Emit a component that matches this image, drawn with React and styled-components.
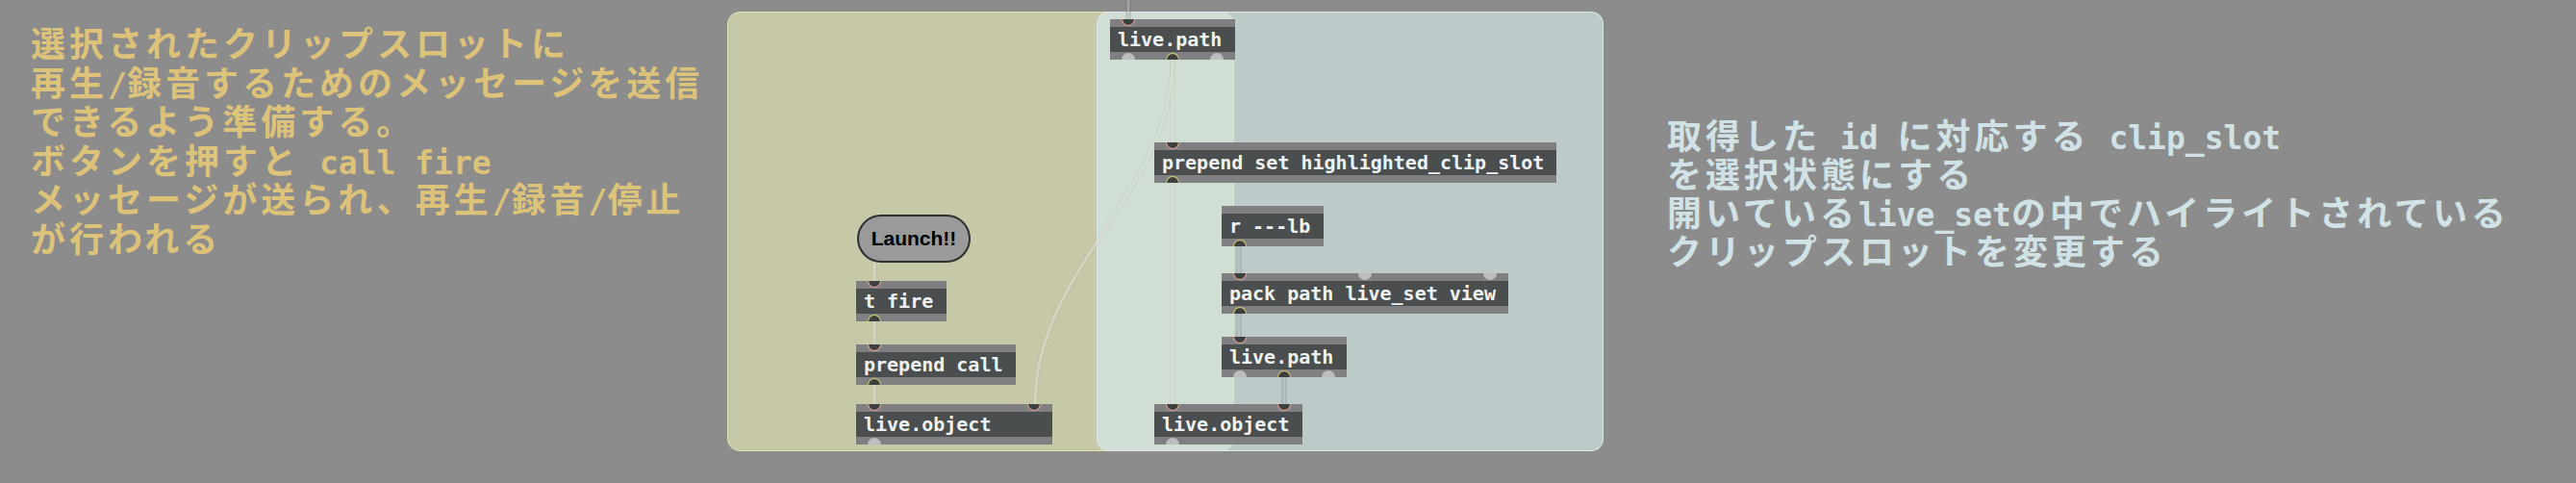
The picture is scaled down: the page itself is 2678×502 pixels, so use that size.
import styled, { createGlobalStyle } from 'styled-components'

const GlobalStyle = createGlobalStyle`
  html, body {
    margin: 0;
    padding: 0;
    background: #8c8c8c;
  }
`

const MONO = '"DejaVu Sans Mono", "Liberation Mono", monospace'
const JP = '"Noto Sans CJK JP", "Noto Sans", sans-serif'

// patcher objects, placed where they sit on the Max canvas
const objects = [
  { x: 1154, y: 20, w: 130, text: 'live.path', ins: ['in'], outs: ['off', 'out', 'off'] },
  { x: 890, y: 292, w: 94, text: 't fire', ins: ['in'], outs: ['out'] },
  { x: 890, y: 358, w: 166, text: 'prepend call', ins: ['in'], outs: ['out'] },
  { x: 890, y: 420, w: 204, text: 'live.object', ins: ['in', 'in'], outs: ['off'] },
  { x: 1200, y: 148, w: 418, text: 'prepend set highlighted_clip_slot', ins: ['in'], outs: ['out'] },
  { x: 1270, y: 214, w: 106, text: 'r ---lb', ins: [], outs: ['out'] },
  { x: 1270, y: 284, w: 298, text: 'pack path live_set view', ins: ['in', 'off', 'off'], outs: ['out'] },
  { x: 1270, y: 350, w: 130, text: 'live.path', ins: ['in'], outs: ['off', 'out', 'off'] },
  { x: 1200, y: 420, w: 154, text: 'live.object', ins: ['in', 'in'], outs: ['off'] },
]

// strong cords sit on the blue panel / grey canvas, faint ones cross the light strip
const cords = [
  { d: 'M1173,-4 L1173,20', strong: true },
  { d: 'M909,273 L909,292', strong: false },
  { d: 'M909,334 L909,358', strong: false },
  { d: 'M909,400 L909,420', strong: false },
  { d: 'M1219,62 L1219,148', strong: false },
  { d: 'M1219,190 L1219,420', strong: false },
  { d: 'M1219,62 C1219,200 1076,280 1076,420', strong: false },
  { d: 'M1288,256 L1288,284', strong: true },
  { d: 'M1288,326 L1288,350', strong: true },
  { d: 'M1335,392 L1335,420', strong: true },
]

const Canvas = styled.div`
  position: relative;
  width: 2678px;
  height: 502px;
  overflow: hidden;
  background: #8c8c8c;
`

const Panel = styled.div`
  position: absolute;
  left: ${(p) => p.$x}px;
  top: ${(p) => p.$y}px;
  width: ${(p) => p.$w}px;
  height: ${(p) => p.$h}px;
  box-sizing: border-box;
  border-radius: 13px;
  background: ${(p) => p.$bg};
  border: 1.5px solid ${(p) => p.$edge};
`

const Cords = styled.svg`
  position: absolute;
  left: 0;
  top: 0;
  pointer-events: none;
`

const Box = styled.div`
  position: absolute;
  left: ${(p) => p.$x}px;
  top: ${(p) => p.$y}px;
  width: ${(p) => p.$w}px;
  height: 42px;
  display: flex;
  flex-direction: column;
  background: #808083;
`

const PortRow = styled.div`
  height: 8px;
  display: flex;
  justify-content: space-between;
  align-items: ${(p) => (p.$edge === 'top' ? 'flex-start' : 'flex-end')};
  padding: 0 12px;
`

const Port = styled.span`
  box-sizing: border-box;
  width: 14px;
  height: 7px;
  border-radius: ${(p) => (p.$edge === 'top' ? '0 0 7px 7px' : '7px 7px 0 0')};
  background: ${(p) => (p.$kind === 'off' ? '#bdbdbd' : '#3d4040')};
  border: ${(p) =>
    p.$kind === 'in' ? '1.5px solid #eea596' : p.$kind === 'out' ? '1.5px solid #d6d56c' : 'none'};
  ${(p) => (p.$edge === 'top' ? 'border-top: none;' : 'border-bottom: none;')}
`

const Label = styled.div`
  height: 26px;
  background: #4a4e4e;
  color: #eef2f3;
  font-family: ${MONO};
  font-weight: bold;
  font-size: 20px;
  line-height: 26px;
  padding-left: 8px;
  white-space: pre;
`

const Button = styled.div`
  position: absolute;
  left: ${(p) => p.$x}px;
  top: ${(p) => p.$y}px;
  width: 118px;
  height: 50px;
  box-sizing: border-box;
  border: 2px solid #2f3131;
  border-radius: 25px;
  background: #9a9a9a;
  display: flex;
  align-items: center;
  justify-content: center;
  color: #000;
  font-family: "Liberation Sans", Arial, sans-serif;
  font-weight: bold;
  font-size: 21px;
`

const Comment = styled.div`
  position: absolute;
  left: ${(p) => p.$x}px;
  top: ${(p) => p.$y}px;
  color: ${(p) => p.$color};
  font-family: ${JP};
  font-weight: bold;
  font-size: 36px;
  letter-spacing: 4px;
`

const Line = styled.div`
  height: ${(p) => p.$lh}px;
  line-height: ${(p) => p.$lh}px;
  white-space: pre;
`

const L = styled.span`
  font-family: ${MONO};
  font-size: 33px;
  letter-spacing: 0;
  line-height: 30px;
`

const PatchBox = ({ o }) => (
  <Box $x={o.x} $y={o.y} $w={o.w}>
    <PortRow $edge="top">
      {o.ins.map((k, i) => (
        <Port key={i} $kind={k} $edge="top" />
      ))}
    </PortRow>
    <Label>{o.text}</Label>
    <PortRow $edge="bottom">
      {o.outs.map((k, i) => (
        <Port key={i} $kind={k} $edge="bottom" />
      ))}
    </PortRow>
  </Box>
)

const App = () => {
  return (
    <>
      <GlobalStyle />
      <Canvas>
        <Comment $x={32} $y={23} $color="#ddc27a">
          <Line $lh={40.6}>選択されたクリップスロットに</Line>
          <Line $lh={40.6}>再生<L>/</L>録音するためのメッセージを送信</Line>
          <Line $lh={40.6}>できるよう準備する。</Line>
          <Line $lh={40.6}>ボタンを押すと<L> call fire</L></Line>
          <Line $lh={40.6}>メッセージが送られ、再生<L>/</L>録音<L>/</L>停止</Line>
          <Line $lh={40.6}>が行われる</Line>
        </Comment>

        <Panel $x={756} $y={12} $w={527} $h={457} $bg="#c7c8a8" $edge="#dfe1b4" />
        <Panel $x={1140} $y={12} $w={527} $h={457} $bg="rgba(212, 233, 233, 0.67)" $edge="rgba(222, 236, 236, 0.9)" />

        <Cords width="2678" height="502">
          {cords.map((c, i) => (
            <g key={i} fill="none" strokeLinecap="round">
              <path
                d={c.d}
                stroke={c.strong ? 'rgba(40, 45, 45, 0.22)' : 'rgba(60, 60, 50, 0.06)'}
                strokeWidth="5"
              />
              <path
                d={c.d}
                stroke={c.strong ? 'rgba(236, 240, 240, 0.4)' : 'rgba(236, 238, 224, 0.45)'}
                strokeWidth="3"
              />
            </g>
          ))}
        </Cords>

        <Button $x={891} $y={223}>Launch!!</Button>
        {objects.map((o, i) => (
          <PatchBox key={i} o={o} />
        ))}

        <Comment $x={1733} $y={119} $color="#d0e2e6">
          <Line $lh={40}>取得した<L> id </L>に対応する<L> clip_slot</L></Line>
          <Line $lh={40}>を選択状態にする</Line>
          <Line $lh={40}>開いている<L>live_set</L>の中でハイライトされている</Line>
          <Line $lh={40}>クリップスロットを変更する</Line>
        </Comment>
      </Canvas>
    </>
  )
}

export default App
